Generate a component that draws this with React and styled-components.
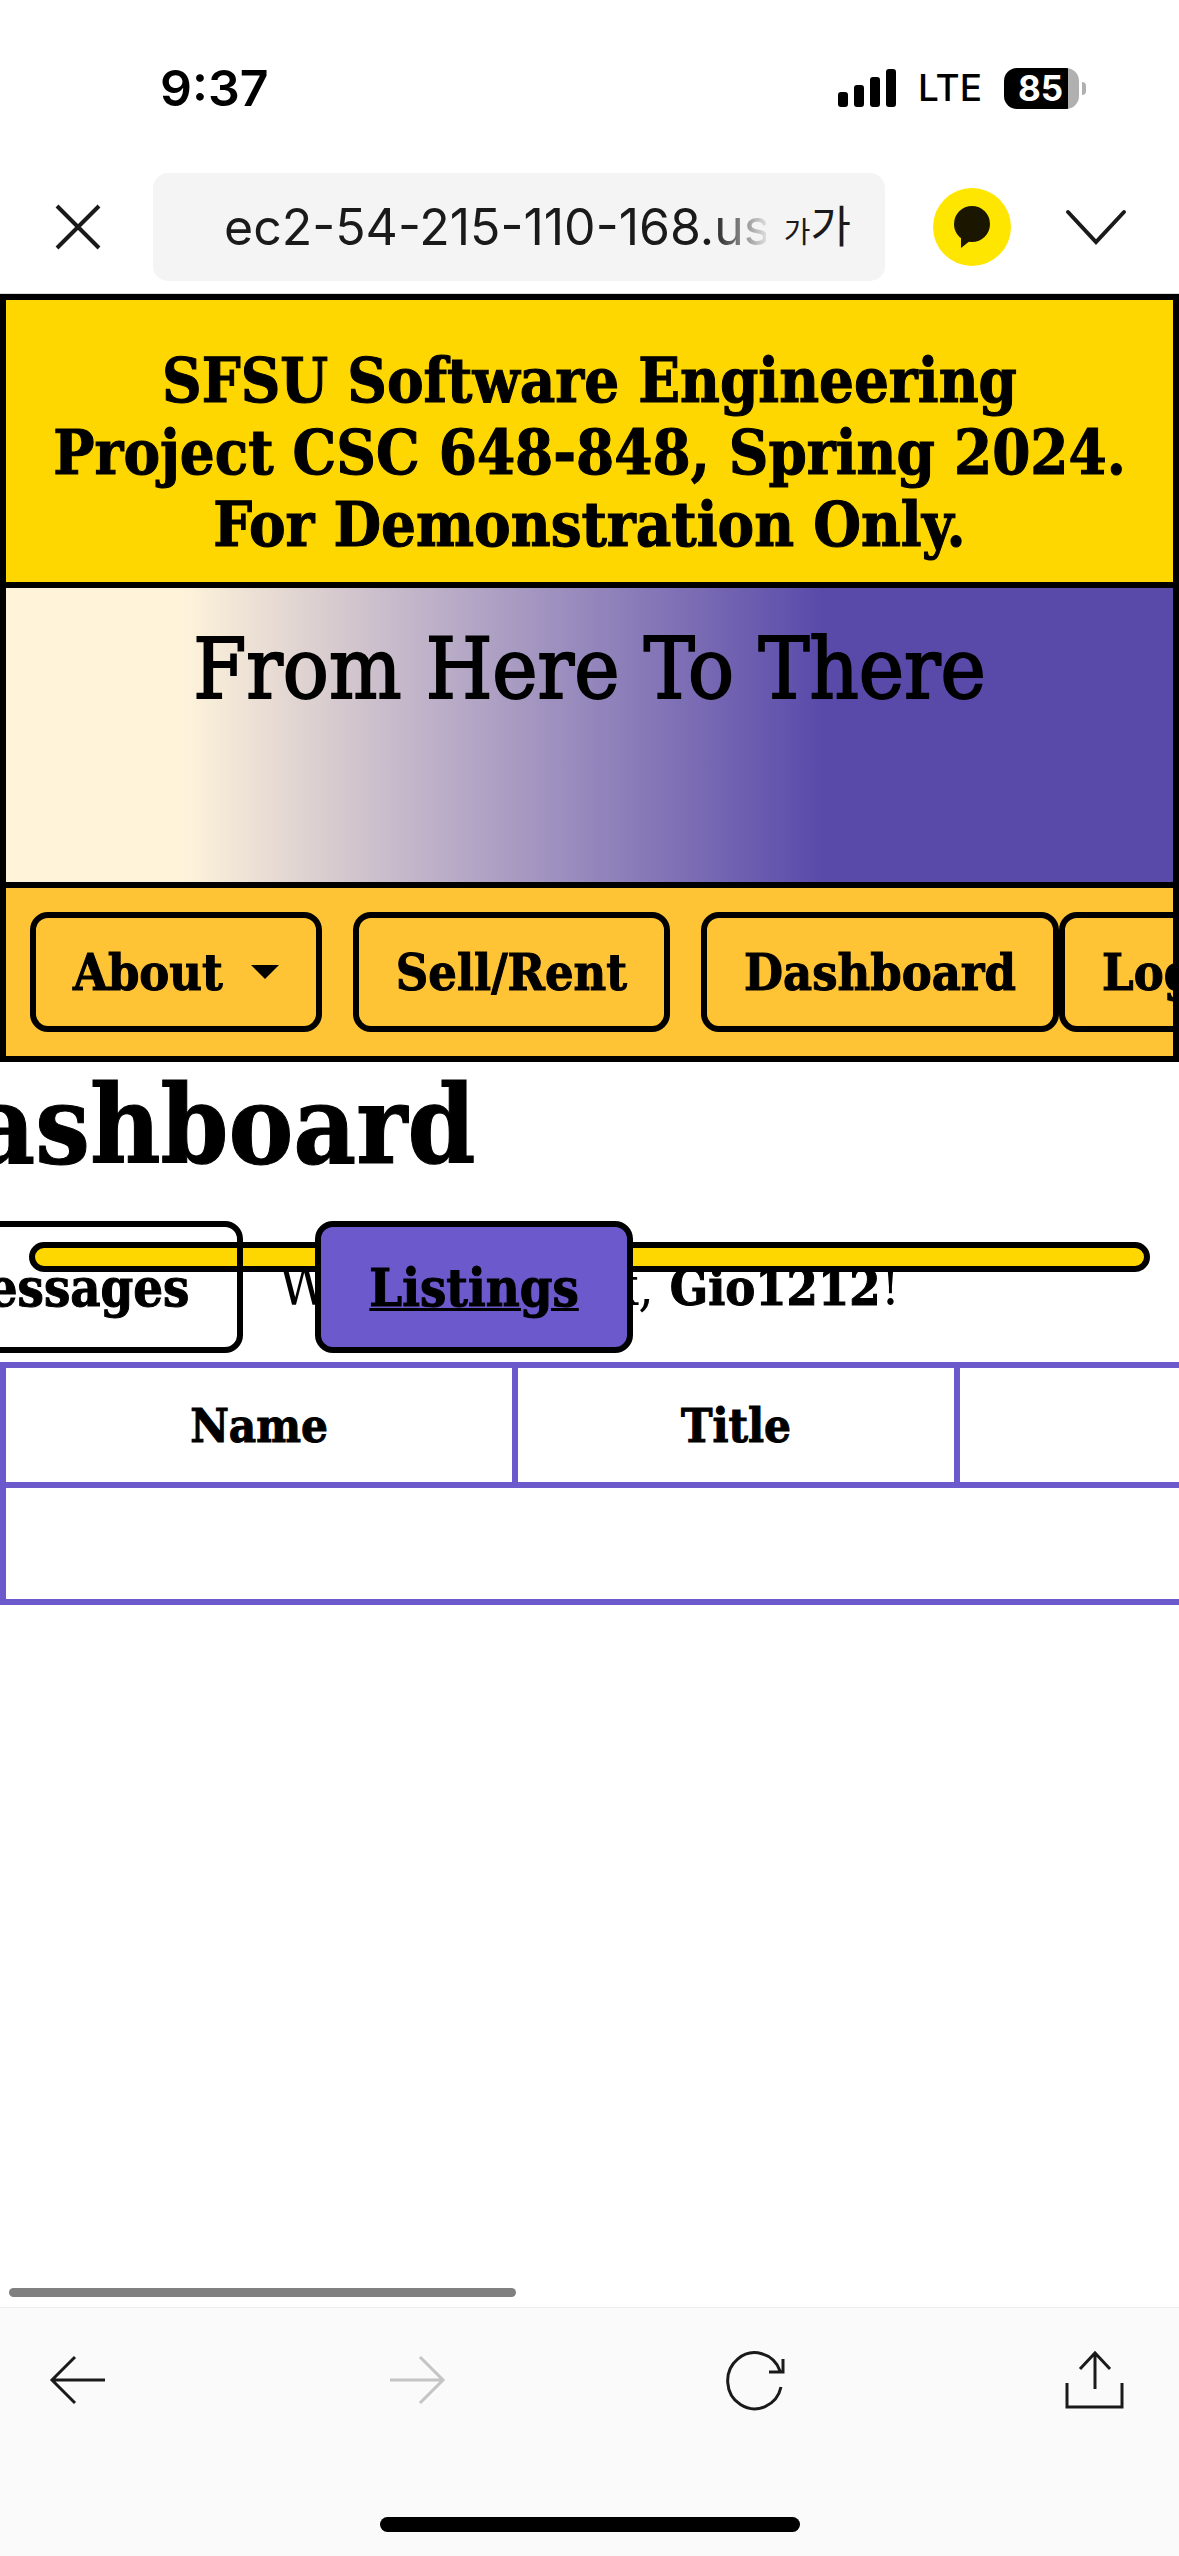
import React from "react";
import styled, { createGlobalStyle, css } from "styled-components";

const slab = `"Roboto Slab", "DejaVu Serif Condensed", "DejaVu Serif", serif`;
const sans = `Inter, Roboto, "Liberation Sans", sans-serif`;

const heavy = css`
  font-weight: 700;
  -webkit-text-stroke: 1px #000;
`;

const Global = createGlobalStyle`
  * { box-sizing: border-box; }
  body { margin: 0; background: #fff; color: #000; font-family: ${slab}; }
  button { font: inherit; color: inherit; background: none; border: 0; padding: 0; }
`;

const Screen = styled.div`
  display: flex;
  flex-direction: column;
  min-height: 100vh;
  overflow: hidden;
`;

const StatusBar = styled.header`
  display: flex;
  justify-content: space-between;
  align-items: center;
  height: 152px;
  padding: 24px 93px 0 160px;
  font-family: ${sans};
`;

const Clock = styled.time`
  font-size: 50px;
  font-weight: 600;
`;

const StatusIcons = styled.div`
  display: flex;
  align-items: center;
  gap: 22px;
`;

const Network = styled.span`
  font-size: 37px;
  font-weight: 500;
  line-height: 42px;
`;

const Battery = styled.div`
  display: flex;
  align-items: center;
  gap: 3px;
`;

const BatteryBody = styled.div`
  display: flex;
  align-items: center;
  justify-content: center;
  width: 75px;
  height: 41px;
  padding-right: 2px;
  border-radius: 13px;
  background: linear-gradient(to right, #000 85%, #b0b0b0 85%);
  color: #fff;
  font-size: 35px;
  font-weight: 700;
`;

const BatteryTip = styled.div`
  width: 4px;
  height: 13px;
  border-radius: 0 4px 4px 0;
  background: #b0b0b0;
`;

const AddressBar = styled.div`
  display: flex;
  align-items: center;
  height: 142px;
  padding: 8px 51px 0;
  border-bottom: 1px solid #ddd;
  font-family: ${sans};
  color: #1a1a1a;
`;

const IconButton = styled.button`
  display: flex;
  flex: none;

  svg {
    overflow: visible;
  }
`;

const UrlBox = styled.div`
  display: flex;
  align-items: center;
  flex: 1;
  min-width: 0;
  height: 108px;
  margin: 0 48px;
  padding: 0 34px 0 71px;
  border-radius: 15px;
  background: #f4f4f4;
`;

const UrlInput = styled.input`
  flex: 1;
  min-width: 0;
  padding: 0;
  border: 0;
  outline: 0;
  background: none;
  font: 50px ${sans};
  color: inherit;
  mask-image: linear-gradient(to right, #000 90%, rgba(0, 0, 0, 0.1));
`;

const TextSize = styled.button`
  display: flex;
  flex: none;
  align-items: baseline;
  margin-left: 18px;
  font-family: "Noto Sans CJK KR", sans-serif;
  font-size: 44px;
  line-height: 60px;
`;

const SmallGlyph = styled.span`
  font-size: 29px;
`;

const KakaoButton = styled.button`
  display: flex;
  flex: none;
  align-items: center;
  justify-content: center;
  width: 78px;
  height: 78px;
  margin-right: 51px;
  border-radius: 50%;
  background: #ffe600;
`;

const SiteHeader = styled.div`
  border: 6px solid #000;
`;

const Notice = styled.p`
  ${heavy}
  margin: 0;
  padding: 45px 42px 21px;
  border-bottom: 6px solid #000;
  background: #ffd700;
  font-size: 61px;
  line-height: 72px;
  text-align: center;
`;

const Hero = styled.div`
  height: 300px;
  padding-top: 30px;
  border-bottom: 6px solid #000;
  background: linear-gradient(to right, #fff4da 15%, #c8bbcb 33%, #594aaa 70%);
  font-size: 85px;
  line-height: 102px;
  text-align: center;
  -webkit-text-stroke: 2px #000;
`;

const Nav = styled.nav`
  display: flex;
  padding: 24px;
  background: #ffc436;
  overflow: hidden;
`;

const NavGroup = styled.div`
  display: flex;
  flex: none;
  gap: 31px;
`;

const NavButton = styled.button`
  ${heavy}
  display: flex;
  flex: none;
  align-items: center;
  gap: 28px;
  height: 120px;
  padding: 0 37px;
  border: 6px solid #000;
  border-radius: 18px;
  font-size: 50px;
`;

const Caret = styled.span`
  border: 14px solid transparent;
  border-top-color: #000;
  border-bottom-width: 0;
`;

const Main = styled.main`
  flex: 1;
`;

const Title = styled.h1`
  ${heavy}
  width: max-content;
  margin: 0 0 0 -112px;
  font-size: 108px;
  line-height: 126px;
`;

const Overlap = styled.section`
  display: grid;
  padding-top: 33px;
`;

const Rule = styled.hr`
  grid-area: 1 / 1;
  align-self: start;
  width: calc(100% - 58px);
  height: 30px;
  margin: 21px auto 0;
  border: 6px solid #000;
  border-radius: 15px;
  background: #ffd700;
`;

const Welcome = styled.p`
  grid-area: 1 / 1;
  align-self: center;
  margin: 0;
  font-size: 55px;
  line-height: 72px;
  text-align: center;

  b {
    ${heavy}
    font-size: 50px;
  }
`;

const Tabs = styled.div`
  grid-area: 1 / 1;
  display: flex;
  gap: 72px;
  width: max-content;
  margin-left: -118px;
  z-index: 1;
`;

const Tab = styled.button`
  ${heavy}
  height: 132px;
  padding: 0 48px;
  border: 6px solid #000;
  border-radius: 18px;
  background: ${(p) => (p.$active ? "#6c5acd" : "transparent")};
  font-size: 52px;
  text-decoration: ${(p) => (p.$active ? "underline" : "none")};
  text-decoration-thickness: 3px;
`;

const Listings = styled.table`
  width: 1400px;
  margin-top: 9px;
  border-collapse: separate;
  border-spacing: 0;
  table-layout: fixed;
  border-top: 6px solid #6c5acd;
  border-left: 6px solid #6c5acd;

  th,
  td {
    height: 117px;
    padding: 0;
    border-bottom: 6px solid #6c5acd;
    border-right: 6px solid #6c5acd;
  }
  th {
    ${heavy}
    height: 120px;
    font-size: 47px;
  }
`;

const ScrollThumb = styled.div`
  width: 43%;
  height: 9px;
  margin: 0 0 10px 9px;
  border-radius: 5px;
  background: #808080;
`;

const Toolbar = styled.footer`
  display: flex;
  flex-direction: column;
  justify-content: space-between;
  height: 249px;
  padding: 41px 0 24px;
  border-top: 1px solid #eee;
  background: #fafafa;
`;

const ToolRow = styled.div`
  display: flex;
  justify-content: space-between;
  padding: 0 54px 0 48px;
`;

const HomeBar = styled.div`
  width: 420px;
  height: 15px;
  margin: 0 auto;
  border-radius: 8px;
  background: #000;
`;

const Icon = ({ w, h, sw = 4, color = "#1a1a1a", d, ...rest }) => (
  <svg width={w} height={h} viewBox={`0 0 ${w} ${h}`} fill="none" stroke={color} strokeWidth={sw} {...rest}>
    <path d={d} />
  </svg>
);

export default function App() {
  return (
    <Screen>
      <Global />
      <StatusBar>
        <Clock>9:37</Clock>
        <StatusIcons>
          <svg width="58" height="38" viewBox="0 0 58 38">
            <rect x="0" y="23" width="10" height="15" rx="3" />
            <rect x="16" y="16" width="10" height="22" rx="3" />
            <rect x="32" y="8" width="10" height="30" rx="3" />
            <rect x="48" y="0" width="10" height="38" rx="3" />
          </svg>
          <Network>LTE</Network>
          <Battery>
            <BatteryBody>85</BatteryBody>
            <BatteryTip />
          </Battery>
        </StatusIcons>
      </StatusBar>
      <AddressBar>
        <IconButton aria-label="Close">
          <Icon w={54} h={54} d="M6 6 48 48M48 6 6 48" />
        </IconButton>
        <UrlBox>
          <UrlInput aria-label="Address" defaultValue="ec2-54-215-110-168.us" />
          <TextSize aria-label="Text size">
            <SmallGlyph>가</SmallGlyph>가
          </TextSize>
        </UrlBox>
        <KakaoButton aria-label="Share to chat">
          <svg width="36" height="42" viewBox="0 0 36 42" fill="#1a1600">
            <circle cx="18" cy="18" r="18" />
            <path d="M7 28V42L17 34Z" />
          </svg>
        </KakaoButton>
        <IconButton aria-label="More">
          <Icon w={66} h={36} d="M6 3 34 33 62 3" strokeLinecap="round" />
        </IconButton>
      </AddressBar>

      <SiteHeader>
        <Notice>SFSU Software Engineering Project CSC 648-848, Spring 2024. For Demonstration Only.</Notice>
        <Hero>From Here To There</Hero>
        <Nav>
          <NavGroup>
            <NavButton>
              About <Caret />
            </NavButton>
            <NavButton>Sell/Rent</NavButton>
            <NavButton>Dashboard</NavButton>
          </NavGroup>
          <NavButton>Logout</NavButton>
        </Nav>
      </SiteHeader>

      <Main>
        <Title>Dashboard</Title>
        <Overlap>
          <Welcome>
            Welcome back, <b>Gio1212</b>!
          </Welcome>
          <Rule />
          <Tabs>
            <Tab>Messages</Tab>
            <Tab $active>Listings</Tab>
          </Tabs>
        </Overlap>
        <Listings>
          <colgroup>
            <col style={{ width: 512 }} />
            <col style={{ width: 442 }} />
            <col />
          </colgroup>
          <thead>
            <tr>
              <th>Name</th>
              <th>Title</th>
              <th></th>
            </tr>
          </thead>
          <tbody>
            <tr>
              <td colSpan={3}></td>
            </tr>
          </tbody>
        </Listings>
      </Main>

      <ScrollThumb />
      <Toolbar>
        <ToolRow>
          <IconButton aria-label="Back">
            <Icon w={60} h={60} sw={3} d="M57 31H4M27 8 4 31 27 54" />
          </IconButton>
          <IconButton aria-label="Forward" disabled>
            <Icon w={60} h={60} sw={3} color="#c4c4c4" d="M3 31H56M33 8 56 31 33 54" />
          </IconButton>
          <IconButton aria-label="Reload">
            <Icon w={60} h={60} sw={3} d="M55 38A27 28 0 1 1 54 22M57 10V23H43" />
          </IconButton>
          <IconButton aria-label="Share">
            <Icon w={60} h={60} sw={3} d="M2 34V58H57V34M30 40V4M15 20 30 4 45 20" />
          </IconButton>
        </ToolRow>
        <HomeBar />
      </Toolbar>
    </Screen>
  );
}
